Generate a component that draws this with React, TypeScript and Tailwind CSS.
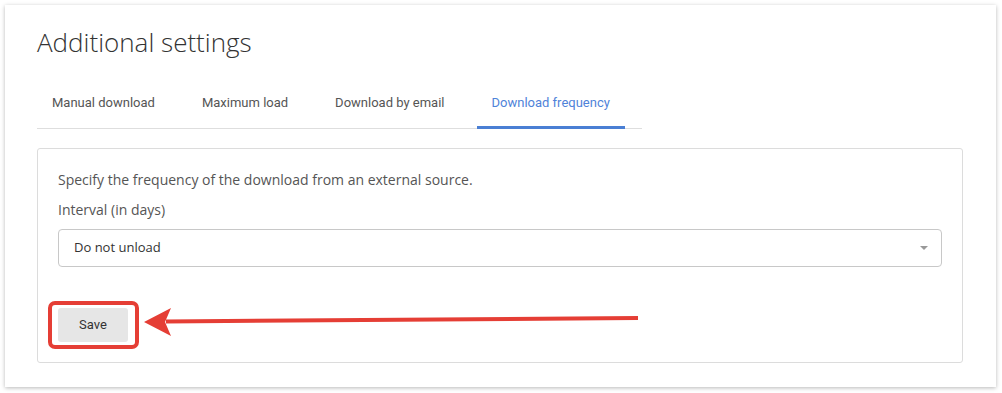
import { useState } from 'react';

const tabs = ['Manual download', 'Maximum load', 'Download by email', 'Download frequency'];

export default function App() {
  const [active, setActive] = useState(3);

  return (
    <div className="relative w-[1002px] h-[393px] bg-white overflow-hidden font-['Open_Sans',sans-serif]">
      <div className="ml-[5px] mt-[5px] w-[991px] h-[382px] bg-white shadow-[0_1px_4px_rgba(0,0,0,0.28)] pl-[32px] pt-[19px]">
        <h1 className="text-[26px] leading-[36px] font-light text-[#333]">Additional settings</h1>

        <div className="mt-[21px] flex w-[605px] border-b border-[#dedede] font-['Roboto',sans-serif]">
          {tabs.map((t, i) => (
            <button
              key={t}
              onClick={() => setActive(i)}
              className={
                'h-[48px] px-[15px] mr-[17px] pt-[12px] pb-[13px] text-[13px] leading-[20px] border-b-[3px] -mb-px ' +
                (i === active ? 'border-[#4a7fd4] text-[#4f83d9]' : 'border-transparent text-[#555]')
              }
            >
              {t}
            </button>
          ))}
        </div>

        <div className="mt-[19px] w-[926px] border border-[#dcdcdc] rounded-[3px] pt-[21px] pb-[20px] px-[20px] text-[14px] text-[#555]">
          <p className="leading-[20px]">Specify the frequency of the download from an external source.</p>
          <p className="mt-[10px] leading-[20px]">Interval (in days)</p>
          <div className="mt-[9px] h-[38px] border border-[#c8c8c8] rounded-[4px] flex items-center justify-between pl-[15px] pr-[13px] text-[13px] text-[#333]">
            <span>Do not unload</span>
            <span className="w-0 h-0 border-l-[4px] border-r-[4px] border-t-[4px] border-l-transparent border-r-transparent border-t-[#999]" />
          </div>
          <button className="mt-[41px] w-[70px] h-[34px] bg-[#e6e6e6] rounded-[3px] text-[13px] text-[#333] font-['Roboto',sans-serif]">
            Save
          </button>
        </div>
      </div>

      {/* annotation */}
      <div className="absolute left-[48px] top-[301px] w-[91px] h-[48px] border-4 border-[#e53e35] rounded-[7px] pointer-events-none" />
      <svg className="absolute left-0 top-0 pointer-events-none" width="1002" height="393">
        <line x1="638" y1="318" x2="166" y2="321.5" stroke="#e53e35" strokeWidth="4" />
        <polygon points="144,322 171,308 165,322 171,336" fill="#e53e35" />
      </svg>
    </div>
  );
}
